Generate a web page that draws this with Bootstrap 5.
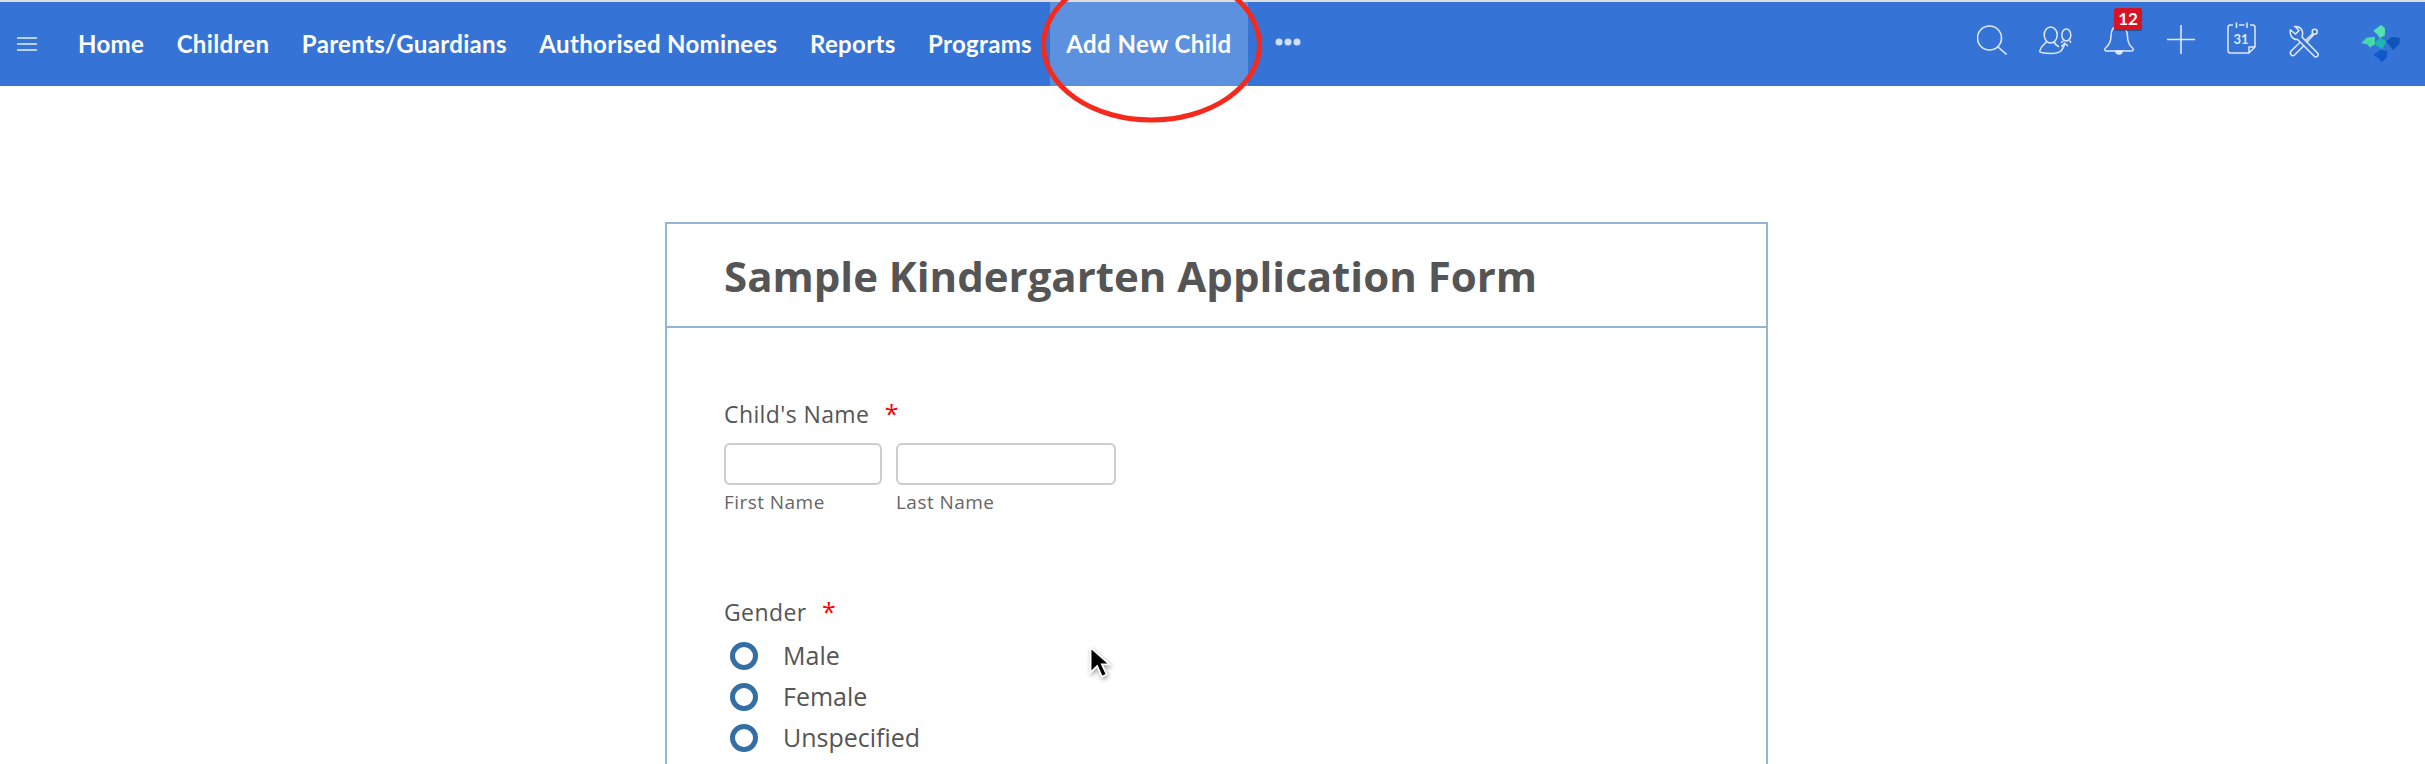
<!DOCTYPE html>
<html lang="en">

<head>
    <meta charset="UTF-8">
    <meta name="viewport" content="width=device-width, initial-scale=1.0">
    <title>Sample Kindergarten Application Form</title>
    <link href="https://cdn.jsdelivr.net/npm/bootstrap@5.3.3/dist/css/bootstrap.min.css" rel="stylesheet">
    <script src="https://cdn.jsdelivr.net/npm/bootstrap@5.3.3/dist/js/bootstrap.bundle.min.js"></script>
    <style>
        body { background: #fff; height: 764px; overflow: hidden; position: relative; }
        .top-rule { height: 2px; background: #dcdcdc; }
        .app-bar { background: #3574d6; height: 84px; padding: 0 25px 0 17px; font-family: Lato, sans-serif; }
        .menu-btn { width: 45px; }
        .app-bar .nav-link { color: #fff; font-size: 24px; font-weight: 700; line-height: 84px; padding: 0 16.250px; letter-spacing: .33px; }
        .app-bar .nav-link:first-child { padding-left: 16px; }
        .app-bar .nav-link.current { background: #5c91e0; padding: 0 16px; margin-left: 2px; letter-spacing: .42px; }
        .more-dots { margin: 0 0 4px 27px; }
        .bar-icons { gap: 32px; padding-bottom: 4px; }
        .bar-icons svg { display: block; }
        .logo-mark { margin-left: 8px; stroke-width: 1.2; stroke-linejoin: round; }
        .bell-wrap { position: relative; }
        .bell-count { position: absolute; left: 10px; top: -12px; width: 28px; height: 22px; background: #d81324; border-radius: 2px; box-shadow: 0 1px 1px rgba(0,0,0,.35); color: #fff; font: 700 17px/22px Lato, sans-serif; text-align: center; }
        .form-box { width: 1103px; margin: 136px 0 0 665px; border: 2px solid #93b6d4; height: 800px; color: #555; font-family: "Open Sans", sans-serif; }
        .form-head { height: 104px; border-bottom: 2px solid #93b6d4; padding-left: 57px; }
        .form-head h1 { font-size: 42px; font-weight: 700; margin: 0; color: #555; line-height: 104px; }
        .form-body { padding: 71px 57px 0; }
        .field-label { font-size: 23px; line-height: 30px; margin-bottom: 14px; letter-spacing: .4px; }
        .req { color: #f00; margin-left: 9px; font-size: 25px; line-height: 0; }
        .name-input { height: 42px; border: 2px solid #ccc; border-radius: 6px; background: #fff; display: block; }
        .name-first { width: 158px; }
        .name-last { width: 220px; }
        .sub-label { font-size: 19px; line-height: 24px; margin-top: 5px; color: #666; letter-spacing: .45px; }
        .name-row { gap: 14px; }
        .gender-block { margin-top: 83px; }
        .gender-block .field-label { margin-bottom: 8px; }
        .radio-row { height: 41px; font-size: 25px; padding-left: 6px; }
        .radio-ring { width: 28px; height: 28px; border: 5px solid #336ea5; border-radius: 50%; margin-right: 25px; }
        .red-ring { position: absolute; left: 1030px; top: 0; pointer-events: none; }
        .mouse-arrow { position: absolute; left: 1087px; top: 644px; pointer-events: none; filter: drop-shadow(1px 2px 2px rgba(0,0,0,.35)); }
    </style>
</head>

<body>
    <div class="top-rule"></div>
    <nav class="app-bar d-flex align-items-center">
        <span class="menu-btn d-flex">
            <svg width="20" height="14" viewBox="0 0 20 14" fill="none" stroke="#e6eefb" stroke-width="1.5"><path d="M0 1h20M0 7h20M0 13h20"/></svg>
        </span>
        <div class="nav">
            <a class="nav-link" href="#">Home</a>
            <a class="nav-link" href="#">Children</a>
            <a class="nav-link" href="#">Parents/Guardians</a>
            <a class="nav-link" href="#">Authorised Nominees</a>
            <a class="nav-link" href="#">Reports</a>
            <a class="nav-link" href="#">Programs</a>
            <a class="nav-link current" href="#">Add New Child</a>
        </div>
        <svg class="more-dots" width="26" height="8" viewBox="0 0 26 8" fill="#cfe0f6"><circle cx="4" cy="4" r="3.5"/><circle cx="13" cy="4" r="3.5"/><circle cx="22" cy="4" r="3.5"/></svg>

        <div class="bar-icons ms-auto d-flex align-items-center">
            <!-- search -->
            <svg width="30" height="44" viewBox="0 0 30 44" fill="none" stroke="#dfe9f9" stroke-width="1.6"><circle cx="12.5" cy="18" r="12"/><path d="M21 27l8.500 7.500"/></svg>
            <!-- contacts -->
            <svg width="33" height="44" viewBox="0 0 33 44" fill="none" stroke="#dfe9f9" stroke-width="1.5">
                <ellipse cx="11.700" cy="15" rx="6.500" ry="8"/>
                <ellipse cx="27.300" cy="15" rx="4.500" ry="6"/>
                <path d="M24.300 20.500c0 1-1 1.500-2.500 2M30.700 20.500c0 1 .5 1.500 1.500 2M7.500 21.700C6 24.500 1 26 .7 31.700 3 33.300 8 33.500 12 33.500 18 33.500 23 33 25.700 24M15 21.700C16 24 18 26 20 26.700"/>
                <path d="M22.300 26.700l3.400-3.400 3.300 2.700"/>
            </svg>
            <!-- bell -->
            <div class="bell-wrap">
                <svg width="31" height="44" viewBox="0 0 31 44" fill="none" stroke="#dfe9f9" stroke-width="1.5">
                    <path d="M15 6C9 6 7 11 7 16 7 23 4 26 1.500 28 0 29.500 1 31 3 31H27C29 31 30 29.500 28.500 28 26 26 23.500 23 23.500 16 23.500 11 21 6 15 6Z"/>
                    <path d="M12 31a3 3 0 0 0 6 0z" fill="#dfe9f9"/>
                </svg>
                <span class="bell-count">12</span>
            </div>
            <!-- plus -->
            <svg width="28" height="44" viewBox="0 0 28 44" fill="none" stroke="#dfe9f9" stroke-width="1.6"><path d="M14 5v29M0 19.500h28"/></svg>
            <!-- calendar -->
            <svg width="29" height="44" viewBox="0 0 29 44" fill="none" stroke="#dfe9f9" stroke-width="1.5">
                <path d="M6 5H3.500Q1 5 1 7.500V30.500Q1 33 3.500 33H22L28 27V7.500Q28 5 25.500 5H23M12 5h5.500M9.500 2.500v5.500M20 2.500v5.500M22 33V27H28"/>
                <text x="14" y="24" text-anchor="middle" font-family="Lato, sans-serif" font-size="13" font-weight="700" fill="#dfe9f9" stroke="none">31</text>
            </svg>
            <!-- tools -->
            <svg width="32" height="44" viewBox="0 0 32 44" fill="none" stroke="#dfe9f9" stroke-width="1.5">
                <path d="M7 6.500 11 10.500 7.500 14 2.500 10C1.500 14 3.500 19.500 9.500 19.500L26 36C28 38.500 31.500 35.500 29.500 33L14 17C16 11 13 6 7 6.500Z"/>
                <circle cx="26.700" cy="11.700" r="2.500"/>
                <path d="M24.700 13.500 17 21M26 14.200 18.500 22.500M12.500 22 3 31C1 33.500 4 37 6.500 35L16 25.500"/>
            </svg>
            <!-- logo -->
            <svg class="logo-mark" width="40" height="44" viewBox="0 0 40 44">
                <path fill="#55e0b0" stroke="#55e0b0" d="M14.300 10.700 21 5.700 24.300 8.300V15L20 17.300 17.700 14Z"/>
                <path fill="#45d9a8" stroke="#45d9a8" d="M2.300 22.700 6.700 18.300 14.300 17.300V24L10 26.700 7.700 24Z"/>
                <path fill="#1fb5b0" stroke="#1fb5b0" d="M15.700 22.700 20 18.300 26 21.700 21.700 28.300 16.700 25Z"/>
                <path fill="#0f56b8" stroke="#0f56b8" d="M26.700 21.700 31.700 17.700 39 18.300V23.300L33.300 29.300 30 25Z"/>
                <path fill="#1259c8" stroke="#1259c8" d="M14.300 35 20 30.700 26.700 31V36.700L21.700 41.700 18.300 37.300Z"/>
            </svg>
        </div>
    </nav>

    <div class="form-box">
        <div class="form-head"><h1>Sample Kindergarten Application Form</h1></div>
        <div class="form-body">
            <div class="field-label">Child's Name <span class="req">*</span></div>
            <div class="name-row d-flex">
                <div><input class="name-input name-first" type="text"><div class="sub-label">First Name</div></div>
                <div><input class="name-input name-last" type="text"><div class="sub-label">Last Name</div></div>
            </div>
            <div class="gender-block">
                <div class="field-label">Gender <span class="req">*</span></div>
                <div class="radio-row d-flex align-items-center"><span class="radio-ring"></span>Male</div>
                <div class="radio-row d-flex align-items-center"><span class="radio-ring"></span>Female</div>
                <div class="radio-row d-flex align-items-center"><span class="radio-ring"></span>Unspecified</div>
            </div>
        </div>
    </div>

    <svg class="red-ring" width="240" height="130" viewBox="0 0 240 130" fill="none" stroke="#f52a1c" stroke-width="5"><ellipse cx="121.500" cy="45" rx="108" ry="75"/></svg>
    <svg class="mouse-arrow" width="31" height="43" viewBox="0 0 26 36"><path d="M3 3V24L8.500 18.500 12.500 27.500 16.500 25.500 12.500 17H19Z" fill="#000" stroke="#fff" stroke-width="1.500"/></svg>
</body>

</html>
